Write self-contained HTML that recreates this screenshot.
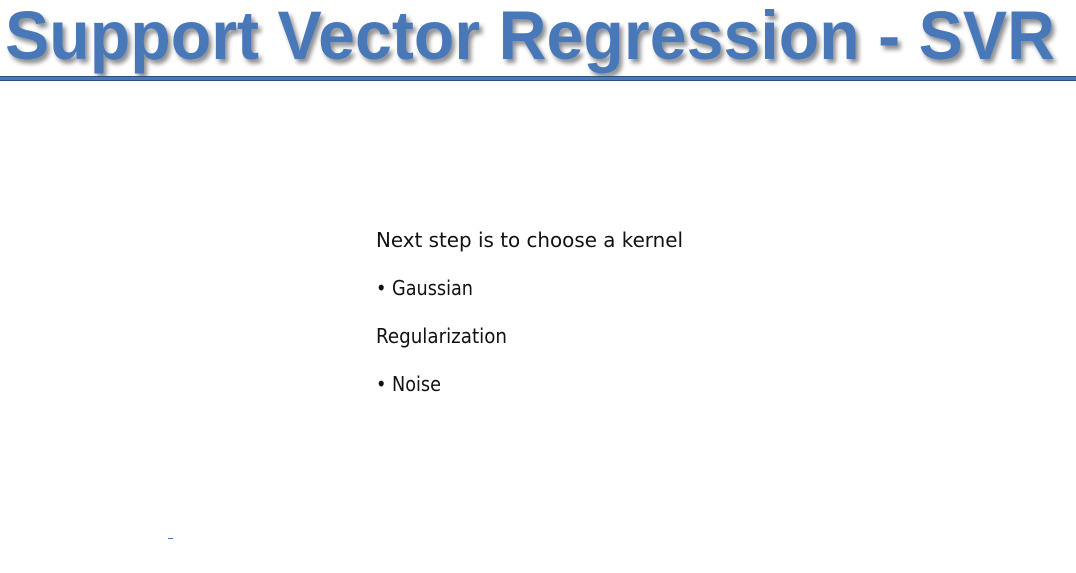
<!DOCTYPE html>
<html><head><meta charset="utf-8"><style>
html,body{margin:0;padding:0;background:#fff;width:1076px;height:573px;overflow:hidden}
</style></head><body>
<svg width="1076" height="573" xmlns="http://www.w3.org/2000/svg">
<defs><filter id="sh" x="-5%" y="-20%" width="110%" height="150%"><feGaussianBlur in="SourceAlpha" stdDeviation="2.5"/><feOffset dx="3" dy="4"/><feComponentTransfer><feFuncA type="linear" slope="0.45"/></feComponentTransfer><feMerge><feMergeNode/><feMergeNode in="SourceGraphic"/></feMerge></filter></defs>
<text x="5" y="59" font-family="Liberation Sans, sans-serif" font-weight="bold" font-size="69" fill="#4a78b8" textLength="1050" lengthAdjust="spacingAndGlyphs" filter="url(#sh)">Support Vector Regression - SVR</text>
<rect x="0" y="76" width="1076" height="5" fill="#4a78b8"/>
<rect x="0" y="76" width="1076" height="1" fill="#2d4f80"/>
<rect x="0" y="80" width="1076" height="1" fill="#2d4f80"/>
<g font-family="DejaVu Sans, sans-serif" font-size="20.5" fill="#111">
<text x="376" y="247" textLength="307" lengthAdjust="spacingAndGlyphs">Next step is to choose a kernel</text>
<text x="376" y="295" textLength="97" lengthAdjust="spacingAndGlyphs">• Gaussian</text>
<text x="376" y="343" textLength="131" lengthAdjust="spacingAndGlyphs">Regularization</text>
<text x="376" y="391" textLength="65" lengthAdjust="spacingAndGlyphs">• Noise</text>
</g>
<rect x="168" y="538" width="5" height="1" fill="#4a6fb8"/>
</svg>
</body></html>
